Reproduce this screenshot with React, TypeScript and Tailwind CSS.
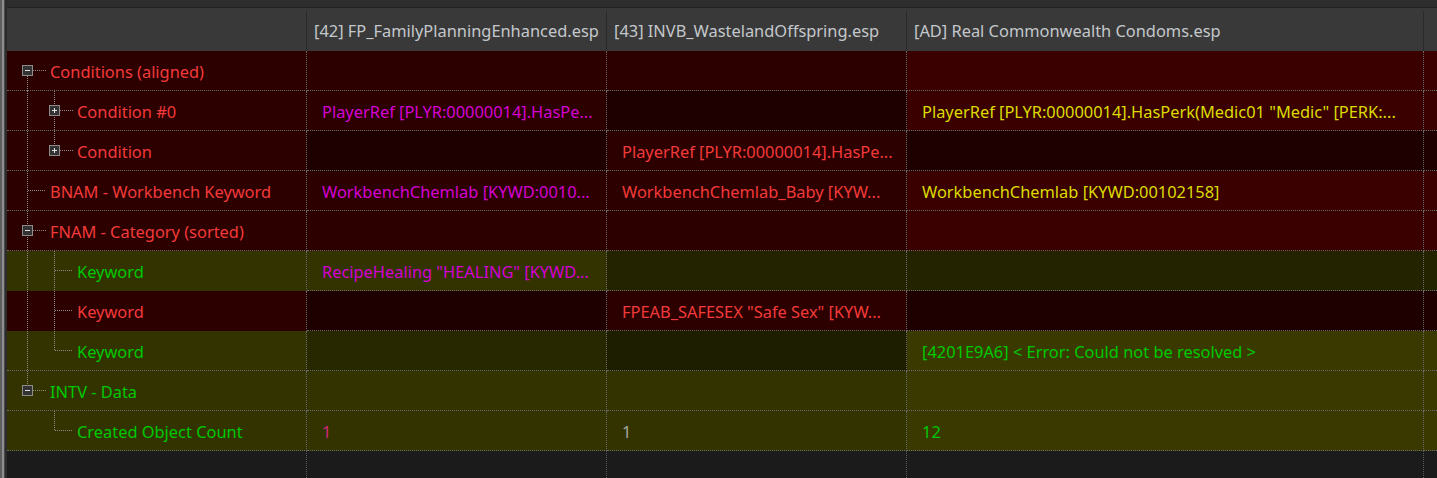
import React from "react";

const RED = "#f23a3a";
const MAG = "#d400d4";
const YEL = "#dcdc00";
const GRN = "#00c800";

const R = "#2d0000";
const RB = "#3a0000";
const RD = "#1f0000";
const O = "#333300";
const OD = "#232300";
const OM = "#282800";
const ODD = "#1d1d00";
const OB = "#3a3a00";

type V = "none" | "full" | "top" | "bottom";
type Row = {
  label: string;
  level: 1 | 2;
  box?: "minus" | "plus";
  v1: V;
  v2: V;
  color: string;
  bg: string[];
  vals: { t: string; c: string }[];
  noLine?: boolean;
};

const e = { t: "", c: RED };

const rows: Row[] = [
  { label: "Conditions (aligned)", level: 1, box: "minus", v1: "bottom", v2: "none", color: RED, bg: [R, R, R, RB], vals: [e, e, e] },
  { label: "Condition #0", level: 2, box: "plus", v1: "full", v2: "full", color: RED, bg: [R, R, RD, RB], vals: [{ t: "PlayerRef [PLYR:00000014].HasPe...", c: MAG }, e, { t: "PlayerRef [PLYR:00000014].HasPerk(Medic01 \"Medic\" [PERK:...", c: YEL }] },
  { label: "Condition", level: 2, box: "plus", v1: "full", v2: "top", color: RED, bg: [R, RD, R, RD], vals: [e, { t: "PlayerRef [PLYR:00000014].HasPe...", c: RED }, e] },
  { label: "BNAM - Workbench Keyword", level: 1, v1: "full", v2: "none", color: RED, bg: [R, R, R, RB], vals: [{ t: "WorkbenchChemlab [KYWD:0010...", c: MAG }, { t: "WorkbenchChemlab_Baby [KYW...", c: RED }, { t: "WorkbenchChemlab [KYWD:00102158]", c: YEL }] },
  { label: "FNAM - Category (sorted)", level: 1, box: "minus", v1: "full", v2: "none", color: RED, bg: [R, R, R, RB], vals: [e, e, e] },
  { label: "Keyword", level: 2, v1: "full", v2: "full", color: GRN, bg: [O, O, OD, OD], vals: [{ t: "RecipeHealing \"HEALING\" [KYWD...", c: MAG }, e, e], noLine: true },
  { label: "Keyword", level: 2, v1: "full", v2: "full", color: RED, bg: [R, RD, R, RD], vals: [e, { t: "FPEAB_SAFESEX \"Safe Sex\" [KYW...", c: RED }, e], noLine: true },
  { label: "Keyword", level: 2, v1: "full", v2: "top", color: GRN, bg: [O, OM, ODD, OB], vals: [e, e, { t: "[4201E9A6] < Error: Could not be resolved >", c: GRN }] },
  { label: "INTV - Data", level: 1, box: "minus", v1: "top", v2: "none", color: GRN, bg: [O, O, O, OB], vals: [e, e, e] },
  { label: "Created Object Count", level: 2, v1: "none", v2: "top", color: GRN, bg: [O, O, O, OB], vals: [{ t: "1", c: "#d0287e" }, { t: "1", c: "#a8a8a0" }, { t: "12", c: GRN }] },
];

const LINE = "#8a8a8a";

function vLine(x: number, mode: V) {
  if (mode === "none") return null;
  const y1 = mode === "bottom" ? 19 : 0;
  const y2 = mode === "top" ? 19 : 40;
  return <line x1={x} y1={y1} x2={x} y2={y2} stroke={LINE} strokeDasharray="1 1" shapeRendering="crispEdges" />;
}

function Box({ x, kind }: { x: number; kind: "minus" | "plus" }) {
  return (
    <g shapeRendering="crispEdges">
      <rect x={x - 4.5} y={14.5} width={10} height={10} fill="#333333" stroke="#8c8c8c" />
      <line x1={x - 2} y1={19.5} x2={x + 3} y2={19.5} stroke="#e0e0e0" />
      {kind === "plus" && <line x1={x + 0.5} y1={17} x2={x + 0.5} y2={22} stroke="#e0e0e0" />}
    </g>
  );
}

function Tree({ r }: { r: Row }) {
  const w = r.level === 1 ? 43 : 70;
  const cx = r.level === 1 ? 20.5 : 47.5;
  const boxRight = r.level === 1 ? 26 : 53;
  const hStart = r.box ? boxRight : cx;
  const hEnd = r.level === 1 ? 39 : 66;
  return (
    <svg width={w} height={39} className="shrink-0 overflow-visible">
      {vLine(20.5, r.v1)}
      {vLine(47.5, r.v2)}
      <line x1={hStart} y1={19.5} x2={hEnd} y2={19.5} stroke={LINE} strokeDasharray="1 1" shapeRendering="crispEdges" />
      {r.box && <Box x={r.level === 1 ? 20 : 47} kind={r.box} />}
    </svg>
  );
}

const widths = ["w-[300px]", "w-[300px]", "w-[300px]", "w-[517px]"];

export default function App() {
  return (
    <div
      className="flex h-[478px] w-[1437px] overflow-hidden bg-[#1b1b1b] text-[16.4px]"
      style={{ fontFamily: '"Noto Sans", "Open Sans", sans-serif' }}
    >
      <div className="flex h-full w-[7px] shrink-0">
        <div className="w-[2px] bg-[#5e5e5e]" />
        <div className="w-[2px] bg-[#8e8e8e]" />
        <div className="w-[1px] bg-[#4a4a4a]" />
        <div className="w-[2px] bg-[#2b2b2b]" />
      </div>
      <div className="flex min-w-0 flex-1 flex-col">
        <div className="h-[8px] shrink-0 border-b border-[#222222] bg-[#2d2d2d]" />
        <div className="flex h-[43px] shrink-0 bg-[#393939] pt-[3px] text-[#c4c8cc]">
          <div className="w-[300px] shrink-0 border-r border-[#2a2a2a]" />
          <div className="flex w-[300px] shrink-0 items-center whitespace-nowrap border-r border-[#2a2a2a] pl-[7px]">[42] FP_FamilyPlanningEnhanced.esp</div>
          <div className="flex w-[300px] shrink-0 items-center whitespace-nowrap border-r border-[#2a2a2a] pl-[7px]">[43] INVB_WastelandOffspring.esp</div>
          <div className="flex w-[517px] shrink-0 items-center whitespace-nowrap border-r border-[#2a2a2a] pl-[7px]">[AD] Real Commonwealth Condoms.esp</div>
          <div className="flex-1" />
        </div>
        {rows.map((r, i) => (
          <div key={i} className="flex h-[40px] shrink-0">
            <div
              className={`flex w-[300px] shrink-0 items-center whitespace-nowrap border-b border-r border-dotted border-r-[#6a6a6a] ${r.noLine ? "border-b-transparent" : "border-b-[#6a6a6a]"}`}
              style={{ backgroundColor: r.bg[0], color: r.color }}
            >
              <Tree r={r} />
              <span className="pt-[3px]">{r.label}</span>
            </div>
            {r.vals.map((v, j) => (
              <div
                key={j}
                className={`flex ${widths[j + 1]} shrink-0 items-center overflow-hidden whitespace-nowrap border-b border-r border-dotted border-[#6a6a6a] pl-[15px] pt-[3px]`}
                style={{ backgroundColor: r.bg[j + 1], color: v.c }}
              >
                {v.t}
              </div>
            ))}
            <div className="flex-1 border-b border-dotted border-[#6a6a6a]" style={{ backgroundColor: r.bg[3] }} />
          </div>
        ))}
        <div className="flex flex-1">
          <div className="w-[300px] shrink-0 border-r border-dotted border-[#5a5a5a]" />
          <div className="w-[300px] shrink-0 border-r border-dotted border-[#5a5a5a]" />
          <div className="w-[300px] shrink-0 border-r border-dotted border-[#5a5a5a]" />
          <div className="w-[517px] shrink-0 border-r border-dotted border-[#5a5a5a]" />
          <div className="flex-1" />
        </div>
      </div>
    </div>
  );
}
